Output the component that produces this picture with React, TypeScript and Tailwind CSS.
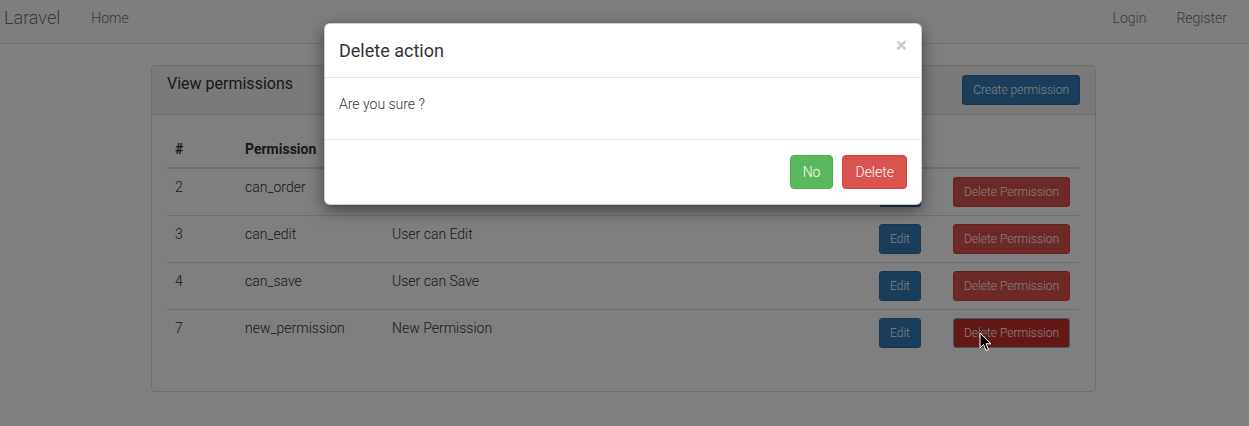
import React from "react";

const rows = [
  { id: "2", name: "can_order", desc: "User can Order" },
  { id: "3", name: "can_edit", desc: "User can Edit" },
  { id: "4", name: "can_save", desc: "User can Save" },
  { id: "7", name: "new_permission", desc: "New Permission" },
];

export default function App() {
  return (
    <div
      className="relative h-[426px] w-[1249px] overflow-hidden bg-white text-[14px] font-light leading-[20px] text-[#333]"
      style={{ fontFamily: "Roboto, 'Liberation Sans', sans-serif" }}
    >
      {/* navbar */}
      <div className="flex h-[44px] items-center justify-between border-b border-[#e7e7e7] bg-[#fdfdfd] pb-[8px]">
        <div className="flex items-center">
          <span className="pl-[4px] text-[18px] text-[#777]">Laravel</span>
          <span className="pl-[31px] text-[14px] text-[#777]">Home</span>
        </div>
        <div className="flex items-center pr-[22px] text-[14px] text-[#777]">
          <span>Login</span>
          <span className="pl-[30px]">Register</span>
        </div>
      </div>

      {/* panel */}
      <div className="ml-[151px] mt-[21px] w-[945px] rounded-[4px] border border-[#ddd] bg-white">
        <div className="flex h-[49px] items-start justify-between rounded-t-[4px] border-b border-[#ddd] bg-[#f5f5f5] px-[15px] pt-[8px]">
          <span className="text-[16px] font-normal leading-[20px] text-[#333]">View permissions</span>
          <button className="mt-[1px] h-[30px] rounded-[3px] border border-[#2e6da4] bg-[#337ab7] px-[10px] text-[12px] text-white">
            Create permission
          </button>
        </div>
        <div className="px-[15px] pb-[34px] pt-[15px]">
          <div className="w-[912px]">
            <div className="flex h-[39px] items-center border-b-2 border-[#ddd] font-bold">
              <div className="w-[70px] pl-[8px]">#</div>
              <div className="w-[147px] pl-[8px]">Permission</div>
              <div className="w-[487px] pl-[8px]">Description</div>
              <div className="w-[75px]" />
              <div className="w-[133px]" />
            </div>
            {rows.map((r, i) => (
              <div
                key={r.id}
                className={`flex h-[47px] items-start pt-[8px] ${i < rows.length - 1 ? "border-b border-[#ddd]" : ""}`}
              >
                <div className="w-[70px] pl-[8px]">{r.id}</div>
                <div className="w-[147px] pl-[8px]">{r.name}</div>
                <div className="w-[487px] pl-[8px]">{r.desc}</div>
                <div className="w-[75px] pl-[8px]">
                  <button className="h-[30px] rounded-[3px] border border-[#2e6da4] bg-[#337ab7] px-[10px] text-[12px] text-white">
                    Edit
                  </button>
                </div>
                <div className="w-[133px] pl-[7px]">
                  {i === rows.length - 1 ? (
                    <button className="h-[30px] rounded-[3px] border border-[#8fa6bd] bg-[#c9302c] px-[10px] text-[12px] text-white">
                      Delete Permission
                    </button>
                  ) : (
                    <button className="h-[30px] rounded-[3px] border border-[#d43f3a] bg-[#d9534f] px-[10px] text-[12px] text-white">
                      Delete Permission
                    </button>
                  )}
                </div>
              </div>
            ))}
          </div>
        </div>
      </div>

      {/* overlay */}
      <div className="absolute inset-0 bg-black/50" />

      {/* modal */}
      <div className="absolute left-[324px] top-[23px] w-[598px] rounded-[6px] border border-black/20 bg-white shadow-[0_5px_15px_rgba(0,0,0,0.5)]">
        <div className="relative h-[54px] border-b border-[#e5e5e5] px-[14px] pt-[14px]">
          <span className="text-[18px] font-normal leading-[26px] text-[#333]">Delete action</span>
          <span className="absolute right-[14px] top-[11px] text-[21px] font-bold leading-[21px] text-black opacity-20">
            ×
          </span>
        </div>
        <div className="h-[61px] px-[14px] pt-[16px]">
          <p>Are you sure ?</p>
        </div>
        <div className="flex h-[65px] items-start justify-end gap-[9px] border-t border-[#e5e5e5] px-[14px] pt-[15px]">
          <button className="h-[34px] rounded-[4px] border border-[#4cae4c] bg-[#5cb85c] px-[12px] text-[14px] text-white">
            No
          </button>
          <button className="h-[34px] rounded-[4px] border border-[#d43f3a] bg-[#d9534f] px-[12px] text-[14px] text-white">
            Delete
          </button>
        </div>
      </div>

      {/* cursor */}
      <svg className="absolute left-[979px] top-[332px]" width="14" height="21" viewBox="0 0 14 21">
        <path d="M1 1 L1 16 L4.5 12.5 L7 18.5 L9.5 17.5 L7 11.8 L12 11.8 Z" fill="black" stroke="white" strokeWidth="1" />
      </svg>
    </div>
  );
}
